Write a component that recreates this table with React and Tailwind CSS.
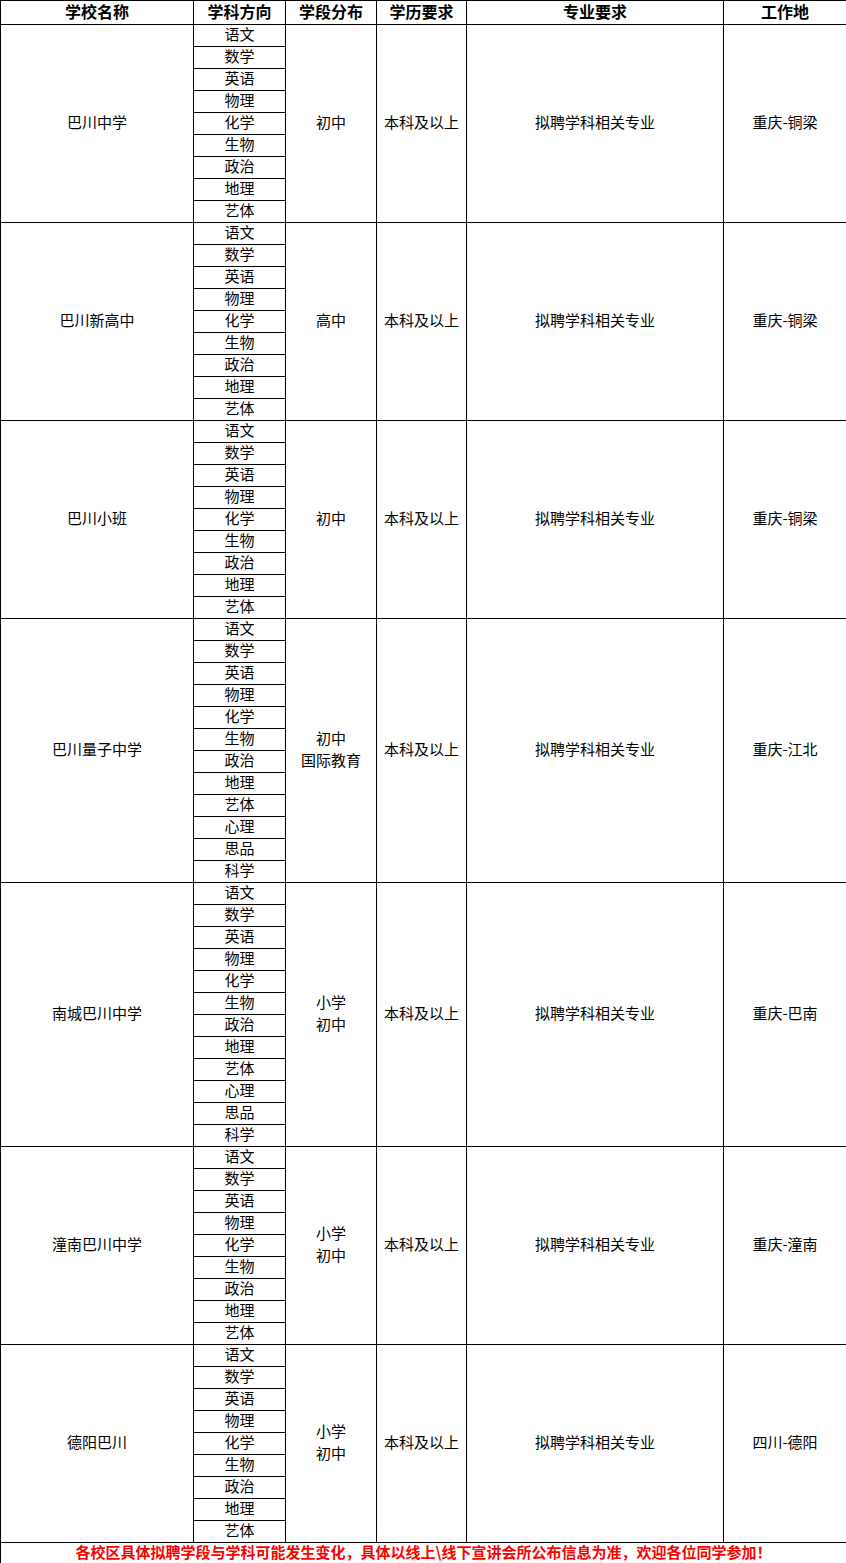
const nine = ["语文", "数学", "英语", "物理", "化学", "生物", "政治", "地理", "艺体"];
const twelve = [...nine, "心理", "思品", "科学"];

const schools = [
  { name: "巴川中学", subjects: nine, stage: ["初中"], place: "重庆-铜梁" },
  { name: "巴川新高中", subjects: nine, stage: ["高中"], place: "重庆-铜梁" },
  { name: "巴川小班", subjects: nine, stage: ["初中"], place: "重庆-铜梁" },
  { name: "巴川量子中学", subjects: twelve, stage: ["初中", "国际教育"], place: "重庆-江北" },
  { name: "南城巴川中学", subjects: twelve, stage: ["小学", "初中"], place: "重庆-巴南" },
  { name: "潼南巴川中学", subjects: nine, stage: ["小学", "初中"], place: "重庆-潼南" },
  { name: "德阳巴川", subjects: nine, stage: ["小学", "初中"], place: "四川-德阳" },
];

const headers = ["学校名称", "学科方向", "学段分布", "学历要求", "专业要求", "工作地"];
const cell = "border border-black text-center align-middle px-0 pt-0 pb-[3px]";

export default function App() {
  return (
    <div className="w-[846px] bg-white text-black font-['Noto_Sans_CJK_SC',sans-serif] text-[15px] leading-[18px]">
      <table className="w-[846px] table-fixed border-collapse">
        <colgroup>
          <col className="w-[193px]" />
          <col className="w-[92px]" />
          <col className="w-[91px]" />
          <col className="w-[90px]" />
          <col className="w-[257px]" />
          <col className="w-[123px]" />
        </colgroup>
        <thead>
          <tr className="h-[24px]">
            {headers.map((h) => (
              <th key={h} className={`${cell} text-[16px] font-bold`}>
                {h}
              </th>
            ))}
          </tr>
        </thead>
        <tbody>
          {schools.map((s) =>
            s.subjects.map((sub, i) => (
              <tr key={s.name + sub} className="h-[22px]">
                {i === 0 && (
                  <td rowSpan={s.subjects.length} className={cell}>
                    {s.name}
                  </td>
                )}
                <td className={cell}>{sub}</td>
                {i === 0 && (
                  <>
                    <td rowSpan={s.subjects.length} className={`${cell} leading-[22px]`}>
                      {s.stage.map((t) => (
                        <div key={t}>{t}</div>
                      ))}
                    </td>
                    <td rowSpan={s.subjects.length} className={cell}>
                      本科及以上
                    </td>
                    <td rowSpan={s.subjects.length} className={cell}>
                      拟聘学科相关专业
                    </td>
                    <td rowSpan={s.subjects.length} className={cell}>
                      {s.place}
                    </td>
                  </>
                )}
              </tr>
            ))
          )}
          <tr className="h-[21px]">
            <td colSpan={6} className={`${cell} text-[15px] font-bold text-[#ff0000]`}>
              各校区具体拟聘学段与学科可能发生变化，具体以线上\线下宣讲会所公布信息为准，欢迎各位同学参加！
            </td>
          </tr>
        </tbody>
      </table>
    </div>
  );
}
